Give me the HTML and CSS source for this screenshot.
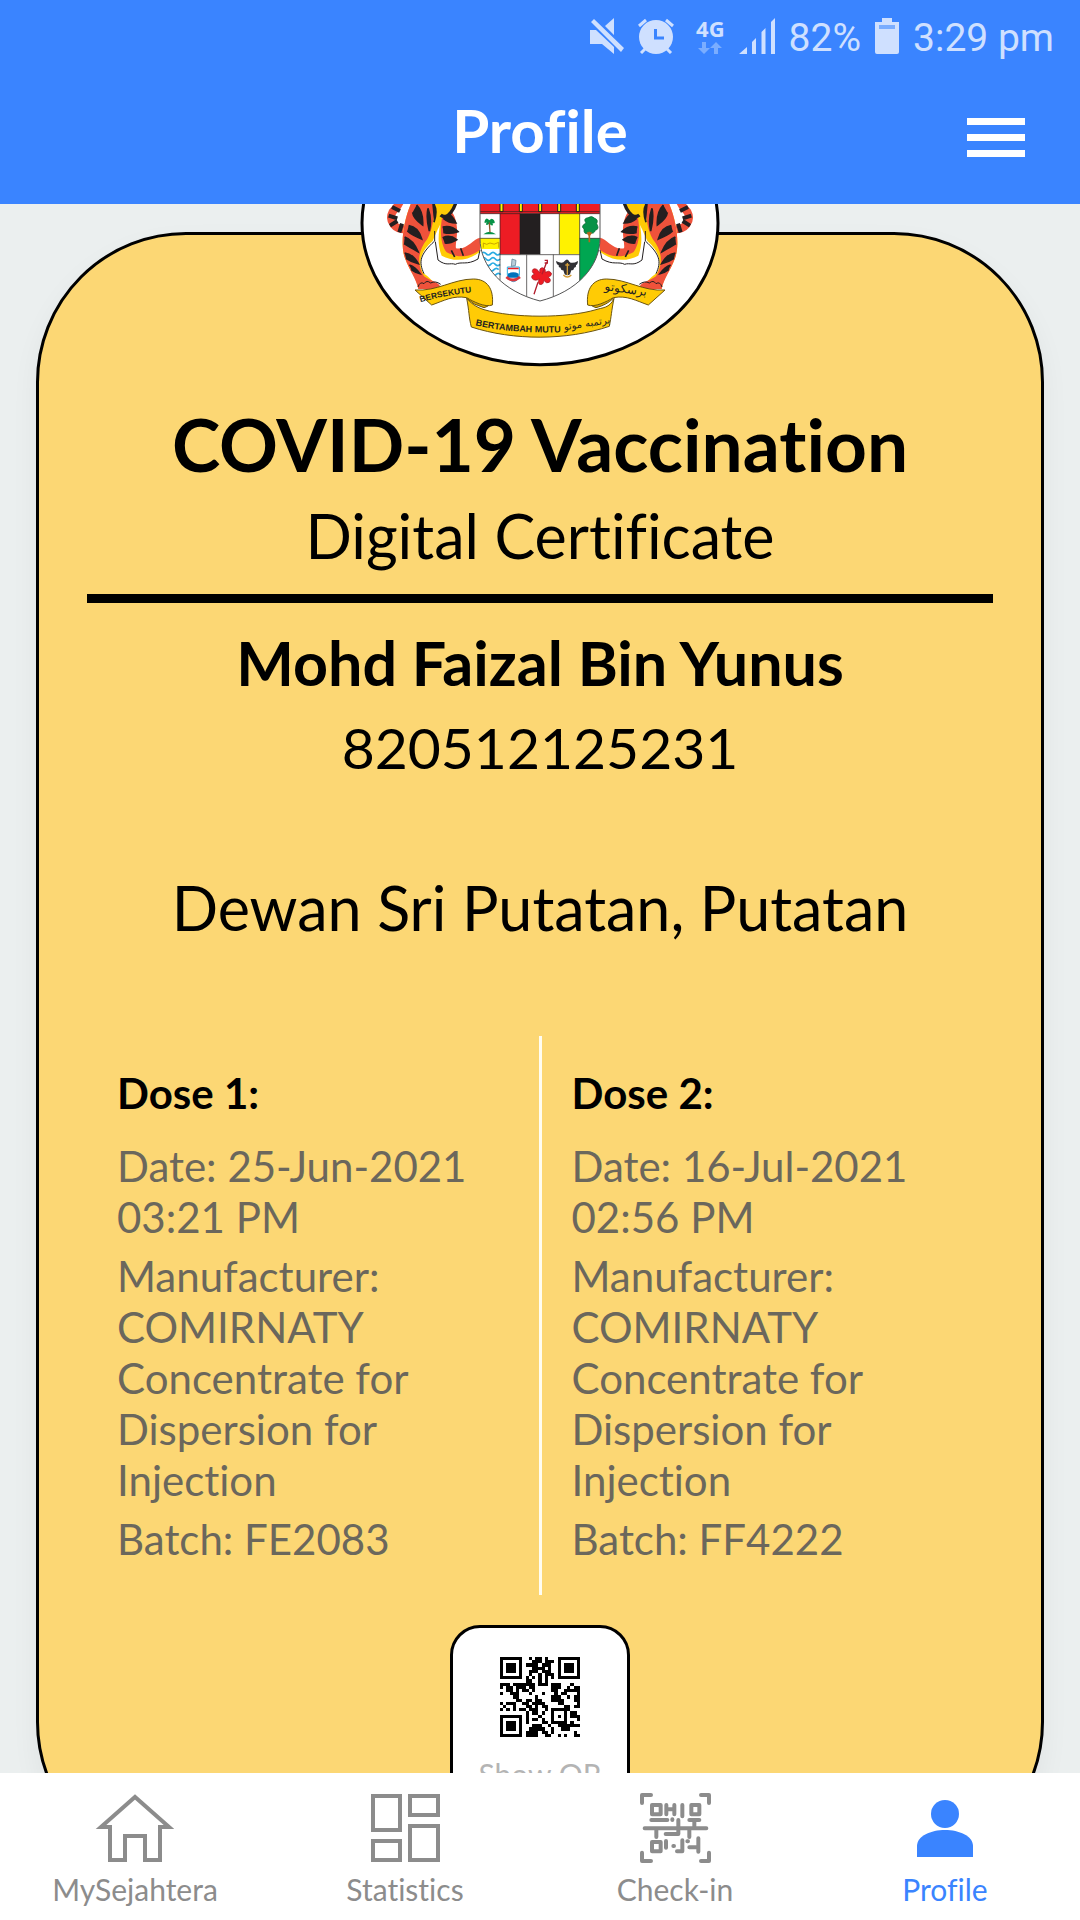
FILE: index.html
```html
<!DOCTYPE html>
<html lang="en">
<head>
<meta charset="utf-8">
<meta name="viewport" content="width=device-width, initial-scale=1">
<title>Profile</title>
<link rel="stylesheet" href="styles.css">
</head>
<body>
<div class="app">
  <header class="header">
    <div class="status">
      <svg class="status-mute" width="34" height="36" viewBox="0 0 34 36" fill="currentColor"><path d="M0 12h6L24 29v7L12 26H0zM15 8l9-8v17zM1 4l3-3 30 29-3 4z"/></svg>
      <svg class="status-alarm" width="36" height="36" viewBox="0 0 36 36"><circle cx="18" cy="19" r="17" fill="currentColor"/><path d="M1 8l7-6M35 8l-7-6M3 35l4-4M33 35l-4-4" stroke="currentColor" stroke-width="3"/><path d="M17.500 11v9H26" fill="none" stroke="#3a84ff" stroke-width="3"/></svg>
      <div class="network">
        <span>4G</span>
        <svg width="24" height="12" viewBox="0 0 24 12" fill="currentColor"><path d="M4 0h4v6h4l-6 6-6-6h4zM16 12h4V6h4l-6-6-6 6h4z"/></svg>
      </div>
      <svg class="status-signal" width="36" height="36" viewBox="0 0 36 36" fill="currentColor"><path d="M0 36l8-7v7zM13 24l4-4v16h-4zM22.500 14l4-4v26h-4zM32 4l4-4v36h-4z"/></svg>
      <span class="status-text">82%</span>
      <svg class="status-battery" width="24" height="36" viewBox="0 0 24 36"><path d="M7 0h10v4h7v30q0 2-2 2H2q-2 0-2-2V4h7z" fill="currentColor"/><path d="M4 7h16v4H4z" fill="#7aadff"/></svg>
      <span class="status-text">3:29 pm</span>
    </div>
    <div class="titlebar">
      <h1 class="title">Profile</h1>
      <button class="menu" type="button" aria-label="Menu"><svg width="58" height="40" viewBox="0 0 58 40" fill="currentColor"><path d="M0 0h58v7H0zM0 16h58v7H0zM0 32h58v7H0z"/></svg></button>
    </div>
  </header>

  <main class="content">
    <article class="card">
      <svg class="crest" width="360" height="288" viewBox="30 -348 1080 864" role="img" aria-label="Coat of arms">
        <defs>
          <clipPath id="shield"><path d="M390-60V130C390 215 460 290 570 318C680 290 750 215 750 130V-60Z"/></clipPath>
          <path id="leftRibbonLine" d="M212 322Q290 298 390 290"/>
          <path id="motto" d="M376 391Q500 420 680 410"/>
          <g id="tiger">
            <path d="M182 102C130 110 115 75 128 50C140 35 150 30 152 10" fill="none" stroke="#ef523b" stroke-width="24"/>
            <path d="M116 62l26 8M120 92l22-14M148 112l8-26M126 36l24 12" stroke="#231f20" stroke-width="12"/>
            <path d="M195 0C158 70 150 150 165 190C180 230 200 250 205 282H272C274 262 250 250 228 240C205 210 205 180 250 140L262 130V195C285 215 325 200 385 192L390 130C370 130 350 165 310 158C290 150 316 110 318 0Z" fill="#fff"/>
            <path d="M195 0C158 70 150 150 165 190C180 230 200 250 205 282H260C254 258 232 245 218 232C205 205 210 170 248 138C262 110 270 75 310 40V0Z" fill="#ffcb05"/>
            <path d="M195 0C158 70 150 150 165 190C180 230 198 250 205 282H272C274 262 240 258 222 244C198 205 205 165 232 132C250 100 252 60 258 0Z" fill="#ef523b"/>
            <path d="M274 70C264 115 262 150 275 182C310 200 350 200 388 172V140C360 180 310 175 294 160Z" fill="#ffcb05"/>
            <path d="M278 60C268 105 272 150 290 172C325 192 365 185 390 165V128C370 130 352 166 318 160C314 145 330 110 314 66C306 45 290 40 278 60Z" fill="#ef523b"/>
            <path d="M200 30Q220 50 218 90Q190 70 188 52M176 92Q205 96 215 132Q185 120 172 108M164 126Q190 135 204 170Q178 156 162 146M164 174Q188 176 205 206Q182 200 168 190M178 210Q196 216 210 236Q194 232 184 224M234 40Q246 72 238 108Q228 70 234 40M246 20Q266 40 252 82M288 52Q306 60 318 84Q296 84 280 70M278 96Q305 90 324 110Q300 118 280 112M278 128Q300 118 320 134Q300 146 284 144M304 166L314 186M332 160L340 182" fill="#231f20" stroke="#231f20" stroke-width="5"/>
            <path d="M254 108V138C210 178 205 200 222 236M256 140L264 195C290 215 300 202 316 208C335 198 350 212 384 192L390 165M204 276Q210 258 222 266Q230 254 242 264Q256 256 272 268" fill="none" stroke="#231f20" stroke-width="3"/>
            <path d="M272 60C300 75 318 40 322 10L300 0Z" fill="#ffcb05"/>
            <path d="M272 60C292 78 318 40 322 0" fill="none" stroke="#231f20" stroke-width="10"/>
          </g>
        </defs>
        <ellipse cx="570" cy="84" rx="534" ry="425" fill="#fff" stroke="#000" stroke-width="9"/>
        <use href="#tiger"/>
        <use href="#tiger" transform="translate(1140 0) scale(-1 1)"/>
        <g clip-path="url(#shield)">
          <path d="M390-60H750V330H390Z" fill="#fff"/>
          <path d="M390-60H750V56H390ZM450 56h60v122h-60Z" fill="#ed1c24"/>
          <path d="M510 56h60v122h-60Z" fill="#231f20"/>
          <path d="M628 56h61v122h-61Z" fill="#fff200"/>
          <path d="M689 130h61v190h-61Z" fill="#00a651"/>
          <path d="M390 130h59v32h-59Z" fill="#fff200"/>
          <path d="M450 20h9v30h-9zM508 20h9v30h-9zM566 20h9v30h-9zM623 20h9v30h-9zM679 20h9v30h-9z" fill="#fff200" stroke="#231f20" stroke-width="3"/>
          <path d="M394 176q7-8 14 0t14 0 14 0 14 0M394 192q7-8 14 0t14 0 14 0 14 0M394 208q7-8 14 0t14 0 14 0 14 0M404 224q7-8 14 0t14 0 14 0M410 239q7-8 14 0t14 0 14 0" fill="none" stroke="#29abe2" stroke-width="5"/>
          <path d="M400 158v-14q10 8 20 0q12 8 26-2v16" fill="none" stroke="#c9a400" stroke-width="3"/>
          <path d="M390 50H750M390 56H750M450 56V260M510 56V178M570 56V178M628 56V178M689 56V260M390 130H450M689 130H750M450 179H689M530 179V320M610 179V320" fill="none" stroke="#231f20" stroke-width="2"/>
          <path d="M418 76q-10-12-14 2q-3 10 6 4q-6 14 8 4q14 12 10-2q10 4 4-8q-6-10-14 0M400 118q18-16 38 0z" fill="#079247"/>
          <path d="M418 82l2 30" stroke="#8b5a2b" stroke-width="4"/>
          <path d="M708 84q-10-14 6-16q12-8 20 2q12 4 6 16q10 16-4 20q-4 12-16 8q-20 8-18-12q-12-8 6-18z" fill="#079247" stroke="#06652f" stroke-width="2"/>
          <path d="M718 110v32M712 112l6 10 6-10" fill="none" stroke="#b5651d" stroke-width="5"/>
          <path d="M472 216h36v24q-4 18-18 20q-16-4-18-20z" fill="#fff" stroke="#29abe2" stroke-width="3"/>
          <path d="M474 236q16-8 32 0v12h-32z" fill="#0072bc"/>
          <path d="M474 218h32v5h-32z" fill="#ed1c24"/><path d="M469 246q20 18 41 0" fill="none" stroke="#d9363e" stroke-width="8"/>
          <path d="M484 214l2-22 12 4-2 16z" fill="#b7cedb" stroke="#53738a" stroke-width="2"/>
          <path d="M570 234q-4-16 8-16q10 2 8 14q12-8 18 2q2 10-10 12q12 8 4 16q-10 6-16-6q-2 16-14 12q-6-8 0-16q-14 8-22-2q-4-10 8-12q-12-8-4-16q10-4 20 12z" fill="#ed1c24" stroke="#a31621" stroke-width="2"/>
          <path d="M576 238l14-36M564 262l-12 36M584 196h8v8h-8" fill="none" stroke="#b31c2b" stroke-width="4"/>
          <path d="M618 198q20 10 26 0q8-10 14 2q8 8 26-2q-1 12-6 12q1 8-6 8q0 8-8 8l-4 12q-8 6-16 0l-4-12q-8 0-8-8q-7 0-6-8q-6 0-8-12z" fill="#303034"/>
          <path d="M646 210h12M640 240q12 12 24 0M652 204v36" fill="none" stroke="#d29c38" stroke-width="4"/>
        </g>
        <path d="M390-60V130C390 215 460 290 570 318C680 290 750 215 750 130V-60" fill="none" stroke="#555" stroke-width="3"/>
        <g fill="#ffcb05" stroke="#6b5410" stroke-width="3">
          <path d="M350 310Q380 302 415 315Q430 330 402 338Q370 330 350 310ZM790 310Q760 302 725 315Q712 330 738 338Q770 330 790 310Z" fill="#d9a900"/>
          <path d="M195 285C260 290 310 252 370 252C412 252 432 282 427 330C405 338 370 320 350 308C310 300 280 318 245 330Z"/>
          <path d="M945 285C880 290 830 252 770 252C728 252 708 282 713 330C735 338 770 320 790 308C830 300 860 318 895 330Z"/>
          <path d="M350 310C358 350 356 365 364 396C490 437 650 437 778 394C784 365 784 350 792 310C780 340 755 338 738 344C650 370 490 370 402 344C385 338 370 332 350 310Z"/>
        </g>
        <g class="crest-text">
          <text font-size="25"><textPath href="#leftRibbonLine">BERSEKUTU</textPath></text>
          <text font-size="27"><textPath href="#motto">BERTAMBAH MUTU</textPath></text>
          <text class="jawi" font-size="30" x="712" y="395" transform="rotate(-9 712 395)">برتمبه موتو</text>
          <text class="jawi" font-size="36" x="826" y="294" transform="rotate(8 826 294)">برسکوتو</text>
        </g>
      </svg>

      <h2 class="heading">COVID-19 Vaccination</h2>
      <p class="line subtitle">Digital Certificate</p>
      <hr class="rule">
      <p class="line name">Mohd Faizal Bin Yunus</p>
      <p class="line id-number">820512125231</p>
      <p class="line place">Dewan Sri Putatan, Putatan</p>

      <div class="doses">
        <section class="dose">
          <h3 class="dose-title">Dose 1:</h3>
          <p>Date: 25-Jun-2021 03:21 PM</p>
          <p>Manufacturer: COMIRNATY Concentrate for Dispersion for Injection</p>
          <p>Batch: FE2083</p>
        </section>
        <div class="divider"></div>
        <section class="dose">
          <h3 class="dose-title">Dose 2:</h3>
          <p>Date: 16-Jul-2021 02:56 PM</p>
          <p>Manufacturer: COMIRNATY Concentrate for Dispersion for Injection</p>
          <p>Batch: FF4222</p>
        </section>
      </div>

      <button class="qr" type="button">
        <svg width="80" height="80" viewBox="0 0 25 25" shape-rendering="crispEdges">
          <path fill="none" stroke="#000" d="M.5 .5h6v6h-6zM18.500 .5h6v6h-6zM.5 18.500h6v6h-6zM16.500 16.500h4v4h-4z"/>
          <path d="M2 2h3v3H2zM20 2h3v3h-3zM2 20h3v3H2zM18 18h1v1h-1z"/>
          <path fill="none" stroke="#000" d="M9 .5h1m1 0h2m1 0h1M10 1.500h3m1 0h3M8 2.500h4m1 0h3M10 3.500h4m1 0h1M9 4.500h3m1 0h3M9 5.500h1m2 0h1m1 0h3M8 6.500h1m1 0h1m1 0h1m1 0h1m1 0h1M8 7.500h2m2 0h1m1 0h1M0 8.500h3m1 0h7m1 0h3m1 0h3m3 0h1M0 9.500h1m1 0h2m1 0h3m1 0h2m5 0h3m2 0h1m1 0h2M2 10.500h2m1 0h1m1 0h2m1 0h1m5 0h2m2 0h5M0 11.500h1m2 0h3m3 0h1m3 0h1m3 0h1m1 0h2m3 0h1M4 12.500h2m5 0h1m4 0h3m2 0h1m1 0h2M5 13.500h2m1 0h2m1 0h2m3 0h4m3 0h2M0 14.500h1m1 0h3m2 0h2m1 0h4m4 0h2m4 0h1M1 15.500h1m2 0h1m3 0h2m1 0h1m1 0h2m5 0h2m1 0h2M0 16.500h1m1 0h1m1 0h1m1 0h2m1 0h3m2 0h1m6 0h1M8 17.500h1m1 0h2m1 0h1m8 0h2M8 18.500h1m3 0h1m9 0h3M8 19.500h1m1 0h2m1 0h1m10 0h1M8 20.500h1m4 0h2m7 0h1M10 21.500h3m2 0h1m2 0h7M9 22.500h5m2 0h1m2 0h3M8 23.500h4m1 0h2m1 0h1m6 0h1M8 24.500h4m2 0h2m2 0h1m1 0h1m2 0h2"/>
        </svg>
        <span>Show QR</span>
      </button>
    </article>
  </main>

  <nav class="tabs">
    <a class="tab" href="#home">
      <svg width="80" height="72" viewBox="0 0 80 72" fill="none" stroke="currentColor" stroke-width="4"><path d="M6 34L40 4l34 30H65v33H50V43H30v24H15V34z"/></svg>
      <span>MySejahtera</span>
    </a>
    <a class="tab" href="#statistics">
      <svg width="80" height="72" viewBox="0 0 80 72" fill="none" stroke="currentColor" stroke-width="4"><path d="M8 3h27v34H8zM45 3h28v19H45zM8 48h27v19H8zM45 33h28v34H45z"/></svg>
      <span>Statistics</span>
    </a>
    <a class="tab" href="#check-in">
      <svg width="80" height="72" viewBox="15 21 240 216" fill="none" stroke="currentColor" stroke-width="12" stroke-linecap="round" stroke-linejoin="round"><path d="M36 51V27h27M213 27h24v24M36 200v25h27M237 200v25h-24M66 57h26v28H66zM184 57h24v28h-24zM66 168h26v28H66zM109 57v28M133 57v28M109 70h24M157 57v34M64 102h48M127 100v2M145 102v42h-38M178 102h30M193 102v24M44 127h185M79 127v26M178 127v26M108 165v20M130 180h2M157 163v33h-16M172 166h2M205 157v40M178 184h27"/></svg>
      <span>Check-in</span>
    </a>
    <a class="tab active" href="#profile" aria-current="page">
      <svg width="80" height="72" viewBox="0 0 80 72" fill="currentColor"><circle cx="40" cy="21" r="14"/><path d="M12 64V53C12 43 26 37 40 37s28 6 28 16v11z"/></svg>
      <span>Profile</span>
    </a>
  </nav>
</div>
</body>
</html>
```
FILE: styles.css
```css
* { box-sizing: border-box; }

body {
  margin: 0;
  font-family: Lato, "Open Sans", sans-serif;
  font-variant-ligatures: none;
  color: #000;
  background: #ebefef;
}

h1, h2, h3, p { margin: 0; }

svg { display: block; flex: none; }

button {
  font: inherit;
  font-variant-ligatures: none;
  cursor: pointer;
}

.app {
  display: flex;
  flex-direction: column;
  height: 100vh;
}

/* Header */
.header {
  flex: none;
  color: #fff;
  background: #3a84ff;
}

.status {
  display: flex;
  align-items: center;
  justify-content: flex-end;
  gap: 14px;
  height: 72px;
  padding-right: 26px;
  font: 39px/48px Roboto, sans-serif;
  color: #cfe0ff;
}

.status-text { padding-top: 4px; }

.network {
  display: flex;
  flex-direction: column;
  align-items: center;
  gap: 4px;
  padding-left: 8px;
  font: 700 22px/20px "Open Sans", sans-serif;
}

.network svg { color: #7aadff; }

.titlebar {
  display: grid;
  grid-template-columns: 1fr auto 1fr;
  align-items: center;
  height: 132px;
  padding: 0 55px 12px;
}

.title {
  grid-column: 2;
  padding-bottom: 4px;
  font-size: 60px;
  font-weight: 700;
  line-height: 72px;
}

.menu {
  justify-self: end;
  margin-top: 12px;
  padding: 0;
  border: 0;
  color: inherit;
  background: none;
}

/* Certificate */
.content {
  flex: 1;
  min-height: 0;
  overflow: hidden;
  padding: 28px 36px;
}

.card {
  position: relative;
  display: flex;
  flex-direction: column;
  align-items: center;
  padding: 165px 48px 64px;
  border: 3px solid #000;
  border-radius: 150px;
  background: #fcd774;
  box-shadow: 0 12px 28px rgba(0, 0, 0, 0.05);
}

.crest {
  position: absolute;
  top: -156px;
  left: calc(50% - 180px);
}

.crest-text {
  font-family: "Liberation Sans", sans-serif;
  font-weight: 700;
  fill: #231f20;
}

.jawi {
  font-family: "DejaVu Sans", sans-serif;
  font-weight: 400;
  text-anchor: middle;
}

.heading {
  font-size: 73px;
  font-weight: 700;
  line-height: 88px;
}

.line {
  font-size: 61px;
  line-height: 84px;
  text-align: center;
}

.subtitle { margin-top: 6px; }

.rule {
  width: 100%;
  height: 9px;
  margin: 16px 0 18px;
  border: 0;
  background: #000;
}

.name { font-weight: 700; }

.id-number { font-size: 57px; }

.place { margin-top: 77px; }

.doses {
  display: grid;
  grid-template-columns: 1fr 3px 1fr;
  width: 100%;
  margin-top: 86px;
}

.dose {
  display: flex;
  flex-direction: column;
  gap: 8px;
  padding: 32px 30px 30px;
  font-size: 42px;
  line-height: 51px;
  color: #6b675c;
}

.divider { background: #fffdf2; }

.dose-title {
  margin-bottom: 14px;
  font-size: 42px;
  font-weight: 700;
  color: #000;
}

.qr {
  display: flex;
  flex-direction: column;
  align-items: center;
  gap: 17px;
  width: 180px;
  height: 180px;
  margin-top: 30px;
  padding: 29px 0 0;
  border: 3px solid #000;
  border-radius: 30px;
  font-size: 30px;
  line-height: 40px;
  color: #b4b4b4;
  background: #fff;
}

/* Bottom navigation */
.tabs {
  flex: none;
  display: grid;
  grid-template-columns: repeat(4, 1fr);
  padding: 20px 0 11px;
  background: #fff;
}

.tab {
  display: flex;
  flex-direction: column;
  align-items: center;
  gap: 4px;
  font-size: 30px;
  line-height: 40px;
  color: #8c8c8c;
  text-decoration: none;
}

.tab.active { color: #3a84ff; }
```
